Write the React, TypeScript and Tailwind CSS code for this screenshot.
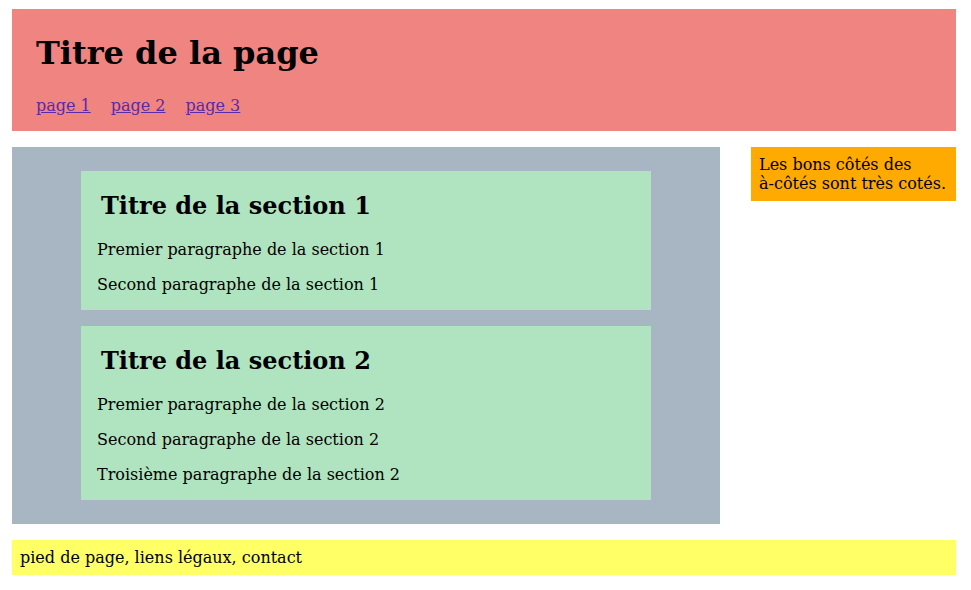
export default function App() {
  const sections = [
    {
      title: "Titre de la section 1",
      paragraphs: ["Premier paragraphe de la section 1", "Second paragraphe de la section 1"],
    },
    {
      title: "Titre de la section 2",
      paragraphs: [
        "Premier paragraphe de la section 2",
        "Second paragraphe de la section 2",
        "Troisième paragraphe de la section 2",
      ],
    },
  ];

  return (
    <div className="min-h-[590px] bg-white pt-[9px] font-['DejaVu_Serif',serif] text-[16px] leading-[19px] text-black">
      <div className="ml-[12px] w-[944px]">
        <header className="bg-[#f08480] px-[24px] pt-[26px] pb-[16px]">
          <h1 className="text-[32px] font-bold leading-[37px]">Titre de la page</h1>
          <nav className="mt-[24px] flex gap-[20px]">
            <a href="#" className="text-[#5a2aa8] underline">page 1</a>
            <a href="#" className="text-[#5a2aa8] underline">page 2</a>
            <a href="#" className="text-[#5a2aa8] underline">page 3</a>
          </nav>
        </header>

        <div className="mt-[16px] flex items-start gap-[31px]">
          <main className="flex w-[708px] flex-col gap-[16px] bg-[#a8b6c3] py-[24px]">
            {sections.map((s) => (
              <section key={s.title} className="mx-auto w-[570px] bg-[#b0e3bf] px-[16px] pt-[21px] pb-[16px]">
                <h2 className="pl-[4px] text-[24px] font-bold leading-[28px]">{s.title}</h2>
                <div className="mt-[20px] flex flex-col gap-[16px]">
                  {s.paragraphs.map((p) => (
                    <p key={p}>{p}</p>
                  ))}
                </div>
              </section>
            ))}
          </main>

          <aside className="w-[205px] bg-[#ffaa00] p-[8px]">
            Les bons côtés des <span className="whitespace-nowrap">à-côtés</span> sont très cotés.
          </aside>
        </div>

        <footer className="mt-[16px] bg-[#ffff66] px-[8px] py-[8px]">
          pied de page, liens légaux, contact
        </footer>
      </div>
    </div>
  );
}
